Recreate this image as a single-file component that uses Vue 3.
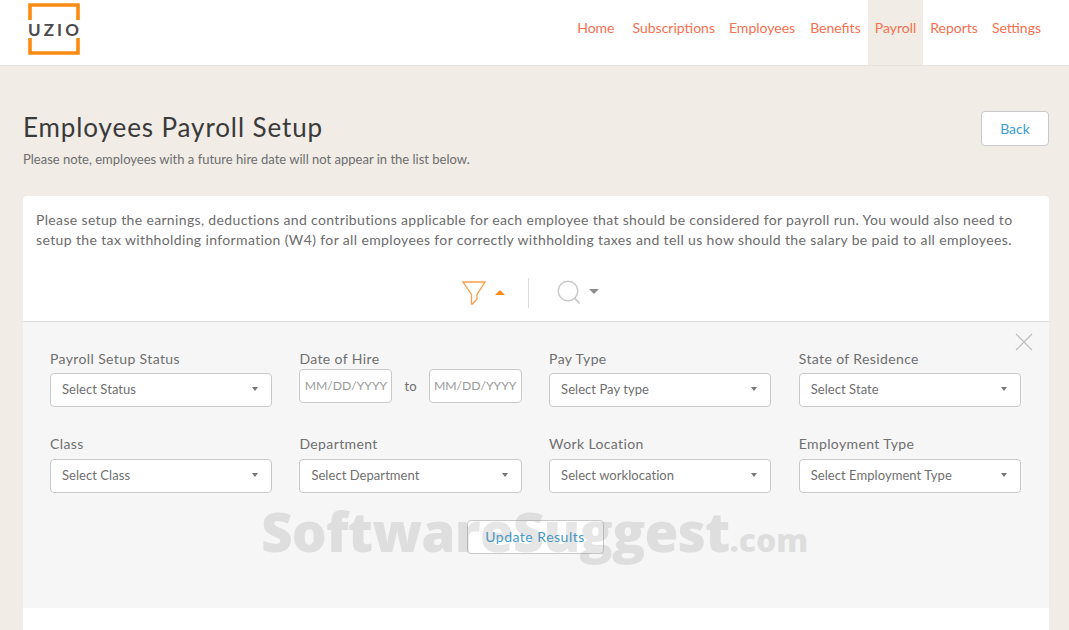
<script setup>
const links = ['Home', 'Subscriptions', 'Employees', 'Benefits', 'Payroll', 'Reports', 'Settings']
const rowOne = [
  { label: 'Pay Type', value: 'Select Pay type' },
  { label: 'State of Residence', value: 'Select State' },
]
const rowTwo = [
  { label: 'Class', value: 'Select Class' },
  { label: 'Department', value: 'Select Department' },
  { label: 'Work Location', value: 'Select worklocation' },
  { label: 'Employment Type', value: 'Select Employment Type' },
]
</script>

<template>
  <div class="page">
    <header class="top">
      <div class="logo">
        <svg width="54" height="52" viewBox="0 0 54 52" class="logo-frame">
          <path d="M3 17V2H51V17M3 35V50H51V35" fill="none" stroke="#f98a12" stroke-width="3.6" />
        </svg>
        <span class="logo-text">UZIO</span>
      </div>
      <nav class="nav">
        <a
          v-for="l in links"
          :key="l"
          class="nav-link"
          :class="[{ active: l === 'Payroll' }, 'nav-' + l.toLowerCase()]"
        >{{ l }}</a>
      </nav>
    </header>

    <main class="main">
      <div class="title-row">
        <div>
          <h1 class="title">Employees Payroll Setup</h1>
          <p class="note">Please note, employees with a future hire date will not appear in the list below.</p>
        </div>
        <button class="btn back">Back</button>
      </div>

      <section class="card">
        <p class="intro">Please setup the earnings, deductions and contributions applicable for each employee that should be considered for payroll run. You would also need to<br /><span class="intro-two">setup the tax withholding information (W4) for all employees for correctly withholding taxes and tell us how should the salary be paid to all employees.</span></p>

        <div class="tools">
          <div class="tool tool-filter">
            <svg width="24" height="24" viewBox="0 0 24 24">
              <path d="M1 1H23L15 13.5V18L10.5 23H9.5V13.5Z" fill="none" stroke="#f9a04a" stroke-width="1.3" />
            </svg>
            <span class="caret-up"></span>
          </div>
          <div class="divider"></div>
          <div class="tool tool-search">
            <svg width="24" height="26" viewBox="0 0 24 26">
              <circle cx="11" cy="11" r="9.8" fill="none" stroke="#c9c9c9" stroke-width="1.4" />
              <path d="M17.5 18L22.5 23.5" stroke="#c4c4c4" stroke-width="1.6" />
            </svg>
            <span class="caret-down"></span>
          </div>
        </div>

        <div class="panel">
          <svg class="close" width="18" height="18" viewBox="0 0 18 18">
            <path d="M1 1L17 17M17 1L1 17" stroke="#bdbdbd" stroke-width="1.2" />
          </svg>
          <div class="grid">
            <div class="field">
              <label class="label">Payroll Setup Status</label>
              <div class="select"><span>Select Status</span><i class="arrow"></i></div>
            </div>
            <div class="field">
              <label class="label">Date of Hire</label>
              <div class="dates">
                <div class="date">MM/DD/YYYY</div>
                <span class="to">to</span>
                <div class="date">MM/DD/YYYY</div>
              </div>
            </div>
            <div v-for="f in rowOne" :key="f.label" class="field">
              <label class="label">{{ f.label }}</label>
              <div class="select"><span>{{ f.value }}</span><i class="arrow"></i></div>
            </div>
            <div v-for="f in rowTwo" :key="f.label" class="field">
              <label class="label">{{ f.label }}</label>
              <div class="select lower"><span>{{ f.value }}</span><i class="arrow"></i></div>
            </div>
          </div>
          <div class="actions">
            <button class="btn update">Update Results</button>
          </div>
        </div>
        <div class="card-foot"></div>
      </section>
    </main>

    <div class="watermark">SoftwareSuggest<span class="wm-com">.com</span></div>
  </div>
</template>

<style>
html, body { margin: 0; padding: 0; background: #f1ece6; overflow: hidden; }
</style>

<style scoped>
.page {
  position: relative;
  width: 1069px;
  height: 630px;
  overflow: hidden;
  background: #f1ece6;
  font-family: "Lato", "Open Sans", sans-serif;
  color: #6f6f6f;
}
.top {
  height: 65px;
  background: #fff;
  border-bottom: 1px solid #e6e3de;
  display: flex;
  justify-content: space-between;
  padding-left: 27px;
}
.logo {
  position: relative;
  width: 54px;
  height: 52px;
  margin-top: 3px;
}
.logo-frame { display: block; }
.logo-text {
  position: absolute;
  left: 1px;
  top: 17px;
  font: 700 17px/20px "Lato", sans-serif;
  letter-spacing: 3.1px;
  color: #4c4a4d;
}
.nav { display: flex; padding-right: 21px; }
.nav-link {
  height: 65px;
  line-height: 55px;
  font-size: 14px;
  color: #f7704f;
  padding: 0 7px;
  box-sizing: border-box;
}
.nav-home { margin-right: 4px; }
.nav-employees { margin-right: 1px; }
.active { background: #f1ece6; }
.main { padding: 44px 20px 0 23px; }
.title-row { display: flex; justify-content: space-between; align-items: flex-start; height: 86px; }
.title {
  margin: 0;
  font-size: 26px;
  line-height: 34px;
  font-weight: 400;
  letter-spacing: 0.9px;
  color: #3a3a3a;
}
.note { margin: 7px 0 0; font-size: 13px; line-height: 16px; color: #6e6e6e; }
.btn {
  font-family: inherit;
  background: #fff;
  border: 1px solid #c9c9c9;
  border-radius: 4px;
  color: #3f9ccf;
  font-size: 14px;
  padding: 0;
}
.back { width: 68px; height: 35px; margin-top: 1px; }
.card {
  background: #fff;
  border-radius: 4px 4px 0 0;
  height: 440px;
}
.intro {
  margin: 0;
  padding: 14px 13px 0;
  font-size: 14px;
  line-height: 20px;
  letter-spacing: 0.345px;
  color: #6c6c6c;
  white-space: nowrap;
}
.intro-two { letter-spacing: 0.37px; }
.tools {
  height: 72px;
  display: flex;
  justify-content: center;
  align-items: center;
  border-bottom: 1px solid #dcdcdc;
  box-sizing: border-box;
  padding-top: 14px;
  padding-right: 11px;
}
.tool { display: flex; align-items: center; }
.tool-filter { gap: 9px; }
.tool-search { gap: 8px; }
.divider { width: 1px; height: 30px; background: #dcdcdc; margin: 0 28px 0 23px; }
.caret-up {
  border-left: 5px solid transparent;
  border-right: 5px solid transparent;
  border-bottom: 5px solid #fb8c14;
}
.caret-down {
  border-left: 5px solid transparent;
  border-right: 5px solid transparent;
  border-top: 5px solid #8d8d8d;
  margin-bottom: 3px;
}
.panel {
  position: relative;
  background: #f6f6f6;
  height: 286px;
  box-sizing: border-box;
  padding: 28px 28px 0 27px;
}
.close { position: absolute; right: 16px; top: 11px; }
.grid {
  display: grid;
  grid-template-columns: 222px 222.3px 222.3px 222px;
  column-gap: 27.4px;
  row-gap: 28px;
}
.field { height: 57px; position: relative; }
.label {
  display: block;
  font-size: 14px;
  line-height: 18px;
  letter-spacing: 0.38px;
  color: #6f6f6f;
}
.select {
  margin-top: 5px;
  height: 34px;
  box-sizing: border-box;
  background: #fff;
  border: 1px solid #c9c9c9;
  border-radius: 4px;
  display: flex;
  align-items: center;
  justify-content: space-between;
  padding: 0 13px 2px 11px;
  font-size: 13px;
  letter-spacing: 0.05px;
  color: #6f6f6f;
}
.lower { margin-top: 6px; }
.arrow {
  border-left: 3.5px solid transparent;
  border-right: 3.5px solid transparent;
  border-top: 4px solid #777;
}
.dates { display: flex; align-items: center; justify-content: space-between; margin-top: 1px; }
.date {
  width: 93px;
  height: 34px;
  box-sizing: border-box;
  background: #fff;
  border: 1px solid #c9c9c9;
  border-radius: 4px;
  font-size: 12.2px;
  line-height: 32px;
  text-align: center;
  color: #9a9a9a;
  white-space: nowrap;
}
.to { font-size: 13px; color: #6f6f6f; }
.actions { display: flex; justify-content: center; margin-top: 28px; padding-right: 1px; }
.update { width: 137px; height: 34px; letter-spacing: 0.5px; padding-bottom: 2px; }
.watermark {
  position: absolute;
  left: 261px;
  top: 494px;
  font: 800 55px/74px "Open Sans", sans-serif;
  letter-spacing: -0.9px;
  color: rgba(120, 120, 120, 0.19);
  white-space: nowrap;
  pointer-events: none;
}
.wm-com { font-size: 32px; letter-spacing: 0; }
</style>
